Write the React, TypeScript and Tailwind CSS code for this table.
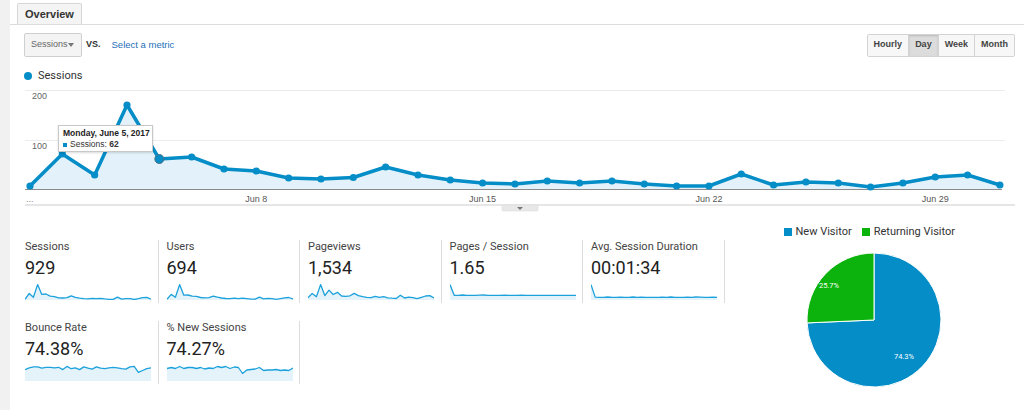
import React from "react";

const BLUE = "#058dc7";
const GREEN = "#0db30d";

// daily sessions Jun 1 – Jul 1
const sessions = [
  8, 72, 30, 170, 62, 66, 42, 38, 24, 22, 25, 46, 30, 20, 14, 12, 18, 14, 18, 12, 8, 8, 32, 10, 16,
  14, 6, 14, 26, 30, 10,
];

type Metric = { label: string; value: string; data: number[]; min?: number };

const metrics: Metric[] = [
  { label: "Sessions", value: "929", data: sessions },
  {
    label: "Users",
    value: "694",
    data: [6, 40, 20, 110, 34, 36, 28, 26, 18, 16, 17, 28, 20, 14, 11, 9, 13, 10, 13, 9, 6, 6, 20, 8, 12, 10, 5, 10, 16, 18, 8],
  },
  {
    label: "Pageviews",
    value: "1,534",
    data: [20, 60, 30, 140, 40, 90, 50, 70, 36, 34, 38, 60, 40, 30, 24, 22, 34, 24, 30, 20, 16, 14, 44, 18, 26, 22, 12, 24, 36, 40, 18],
  },
  {
    label: "Pages / Session",
    value: "1.65",
    data: [5.2, 1.6, 1.6, 1.7, 1.6, 1.6, 1.6, 1.65, 1.7, 1.6, 1.6, 1.6, 1.6, 1.62, 1.6, 1.6, 1.6, 1.65, 1.6, 1.6, 1.6, 1.6, 1.6, 1.6, 1.6, 1.6, 1.55, 1.6, 1.6, 1.6, 1.55],
  },
  {
    label: "Avg. Session Duration",
    value: "00:01:34",
    data: [480, 90, 80, 85, 95, 80, 80, 90, 85, 80, 95, 85, 90, 80, 80, 85, 80, 90, 85, 95, 80, 80, 85, 90, 80, 95, 90, 80, 85, 90, 80],
  },
  {
    label: "Bounce Rate",
    value: "74.38%",
    min: 45,
    data: [70, 74, 76, 76, 73, 75, 75, 74, 75, 70, 77, 72, 74, 70, 76, 73, 71, 76, 73, 72, 74, 75, 74, 72, 71, 76, 77, 64, 68, 72, 74],
  },
  {
    label: "% New Sessions",
    value: "74.27%",
    min: 45,
    data: [70, 72, 70, 74, 70, 72, 72, 70, 72, 69, 71, 70, 74, 72, 74, 70, 73, 72, 60, 67, 68, 69, 72, 66, 67, 67, 68, 66, 67, 66, 71],
  },
];

function Sparkline({ data, min = 0 }: { data: number[]; min?: number }) {
  const w = 126;
  const h = 18;
  const max = Math.max(...data) * 1.04;
  const pts = data.map((v, i) => [i * (w / (data.length - 1)), h - ((v - min) / (max - min)) * (h - 2)]);
  const line = pts.map(([x, y], i) => `${i ? "L" : "M"}${x.toFixed(1)},${y.toFixed(1)}`).join(" ");
  return (
    <svg width={w} height={h} className="block">
      <path d={`${line} L${w},${h} L0,${h} Z`} fill="#e4f2fa" />
      <path d={line} fill="none" stroke="#1ba1db" strokeWidth={1.3} strokeLinejoin="round" />
    </svg>
  );
}

function MetricCell({ label, value, data, min }: Metric) {
  return (
    <div className="w-[141.5px] h-[63px] px-[8px] border-r border-[#dcdcdc] flex flex-col">
      <div className="text-[11px] leading-[14px] text-[#444]">{label}</div>
      <div className="mt-[3px] text-[18px] leading-[22px] text-[#222]">{value}</div>
      <div className="mt-[3px]">
        <Sparkline data={data} min={min} />
      </div>
    </div>
  );
}

function MainChart() {
  const x = (i: number) => 20 + i * 32.33;
  const y = (v: number) => 105 - v * 0.5;
  const line = sessions.map((v, i) => `${i ? "L" : "M"}${x(i).toFixed(1)},${y(v)}`).join(" ");
  const labels = [
    { t: "Jun 8", i: 7 },
    { t: "Jun 15", i: 14 },
    { t: "Jun 22", i: 21 },
    { t: "Jun 29", i: 28 },
  ];
  return (
    <div className="relative h-[128px]">
      <svg width={1014} height={128} className="block" style={{ fontFamily: "'Liberation Sans', Arial, sans-serif" }}>
        <line x1={15} x2={995} y1={5.5} y2={5.5} stroke="#ececec" />
        <line x1={15} x2={995} y1={55.5} y2={55.5} stroke="#ececec" />
        <text x={22} y={14} fontSize={9} fill="#666">200</text>
        <text x={22} y={64} fontSize={9} fill="#666">100</text>
        <path d={`${line} L${x(30)},104 L${x(0)},104 Z`} fill="#e3f2fa" />
        <line x1={15} x2={992} y1={104.5} y2={104.5} stroke="#8a8a8a" />
        <path d={line} fill="none" stroke={BLUE} strokeWidth={3.5} strokeLinejoin="round" />
        {sessions.map((v, i) =>
          i === 4 ? (
            <circle key={i} cx={x(i)} cy={y(v)} r={4.5} fill={BLUE} stroke="#4d6f84" strokeWidth={1} />
          ) : (
            <circle key={i} cx={x(i)} cy={y(v)} r={3.6} fill={BLUE} />
          ),
        )}
        <text x={16} y={117} fontSize={9} fill="#888">...</text>
        {labels.map((l) => (
          <text key={l.t} x={x(l.i)} y={117} fontSize={9} fill="#555" textAnchor="middle">
            {l.t}
          </text>
        ))}
        <line x1={15} x2={1005} y1={120} y2={120} stroke="#e6e6e6" strokeWidth={2} />
        <rect x={492} y={120} width={36} height={6} rx={1} fill="#e8e8e8" stroke="#d8d8d8" strokeWidth={0.5} />
        <path d="M507,122 L513,122 L510,125 Z" fill="#777" />
      </svg>
      <div className="absolute left-[48px] top-[40px] w-[95px] h-[27px] bg-white border border-[#c8c8c8] shadow-[0_1px_2px_rgba(0,0,0,0.15)] px-[4px] pt-[2px] font-['Liberation_Sans',Arial,sans-serif]">
        <div className="text-[8.5px] leading-[11px] font-bold text-[#222] whitespace-nowrap">Monday, June 5, 2017</div>
        <div className="flex items-center gap-[3px] text-[8.5px] leading-[11px] text-[#333] whitespace-nowrap">
          <span className="inline-block w-[4px] h-[4px] bg-[#058dc7]" />
          <span>
            Sessions: <b>62</b>
          </span>
        </div>
      </div>
    </div>
  );
}

function Pie() {
  return (
    <svg width={140} height={140} className="block" style={{ fontFamily: "Roboto, sans-serif" }}>
      <path d="M70,70 L3.06,72.92 A67,67 0 1 0 70,3 Z" fill={BLUE} stroke="#fff" strokeWidth={1} />
      <path d="M70,70 L70,3 A67,67 0 0 0 3.06,72.92 Z" fill={GREEN} stroke="#fff" strokeWidth={1} />
      <text x={25} y={38} fontSize={7.5} fill="#fff" textAnchor="middle">25.7%</text>
      <text x={100} y={109} fontSize={7.5} fill="#fff" textAnchor="middle">74.3%</text>
    </svg>
  );
}

export default function App() {
  const ranges = ["Hourly", "Day", "Week", "Month"];
  return (
    <div className="w-[1024px] h-[410px] flex bg-white overflow-hidden font-['Roboto',sans-serif]">
      <div className="w-[10px] bg-[#f1f1f1] shrink-0" />
      <div className="flex-1 flex flex-col">
        {/* tab bar */}
        <div className="pt-[3px] pl-[7px] border-b border-[#dcdcdc] flex">
          <div className="h-[21px] px-[7px] flex items-center bg-[#f4f4f4] border border-b-0 border-[#d6d6d6] rounded-t-[2px] text-[11px] font-bold text-[#333] font-['Liberation_Sans',Arial,sans-serif]">
            Overview
          </div>
        </div>

        {/* controls */}
        <div className="mt-[8px] pl-[14px] pr-[9px] flex items-center font-['Liberation_Sans',Arial,sans-serif]">
          <div className="w-[58px] h-[24px] pl-[6px] pr-[7px] flex items-center justify-between bg-[#f4f4f4] border border-[#cfcfcf] rounded-[2px] text-[9px] text-[#666]">
            <span>Sessions</span>
            <span className="w-0 h-0 border-l-[3px] border-r-[3px] border-t-[4px] border-l-transparent border-r-transparent border-t-[#777]" />
          </div>
          <span className="ml-[4px] text-[9px] font-bold text-[#333]">VS.</span>
          <span className="ml-[11px] text-[9.5px] text-[#1e6fb8]">Select a metric</span>
          <div className="ml-auto flex h-[23px] border border-[#d3d3d3] rounded-[2px] overflow-hidden">
            {ranges.map((r, i) => (
              <div
                key={r}
                className={`flex items-center px-[6px] text-[9px] font-bold text-[#444] ${i ? "border-l border-[#d3d3d3]" : ""} ${r === "Day" ? "bg-[#dcdcdc] shadow-[inset_0_1px_2px_rgba(0,0,0,0.15)]" : "bg-[#f7f7f7]"}`}
              >
                {r}
              </div>
            ))}
          </div>
        </div>

        {/* legend */}
        <div className="mt-[12px] pl-[14px] flex items-center h-[14px]">
          <span className="w-[8px] h-[8px] rounded-full bg-[#058dc7]" />
          <span className="ml-[6px] text-[11px] text-[#333]">Sessions</span>
        </div>

        <div className="mt-[2px]">
          <MainChart />
        </div>

        {/* metrics + pie */}
        <div className="mt-[12px] flex">
          <div className="pl-[7px] pt-[15px] flex flex-col gap-[18px]">
            <div className="flex">
              {metrics.slice(0, 5).map((m) => (
                <MetricCell key={m.label} {...m} />
              ))}
            </div>
            <div className="flex">
              {metrics.slice(5).map((m) => (
                <MetricCell key={m.label} {...m} />
              ))}
            </div>
          </div>
          <div className="flex-1 flex flex-col items-center">
            <div className="flex items-center h-[14px] text-[11px] text-[#333] pr-[10px]">
              <span className="w-[8px] h-[8px] bg-[#058dc7]" />
              <span className="ml-[4px]">New Visitor</span>
              <span className="ml-[10px] w-[8px] h-[8px] bg-[#0db30d]" />
              <span className="ml-[4px]">Returning Visitor</span>
            </div>
            <div className="mt-[11px]">
              <Pie />
            </div>
          </div>
        </div>
      </div>
    </div>
  );
}
